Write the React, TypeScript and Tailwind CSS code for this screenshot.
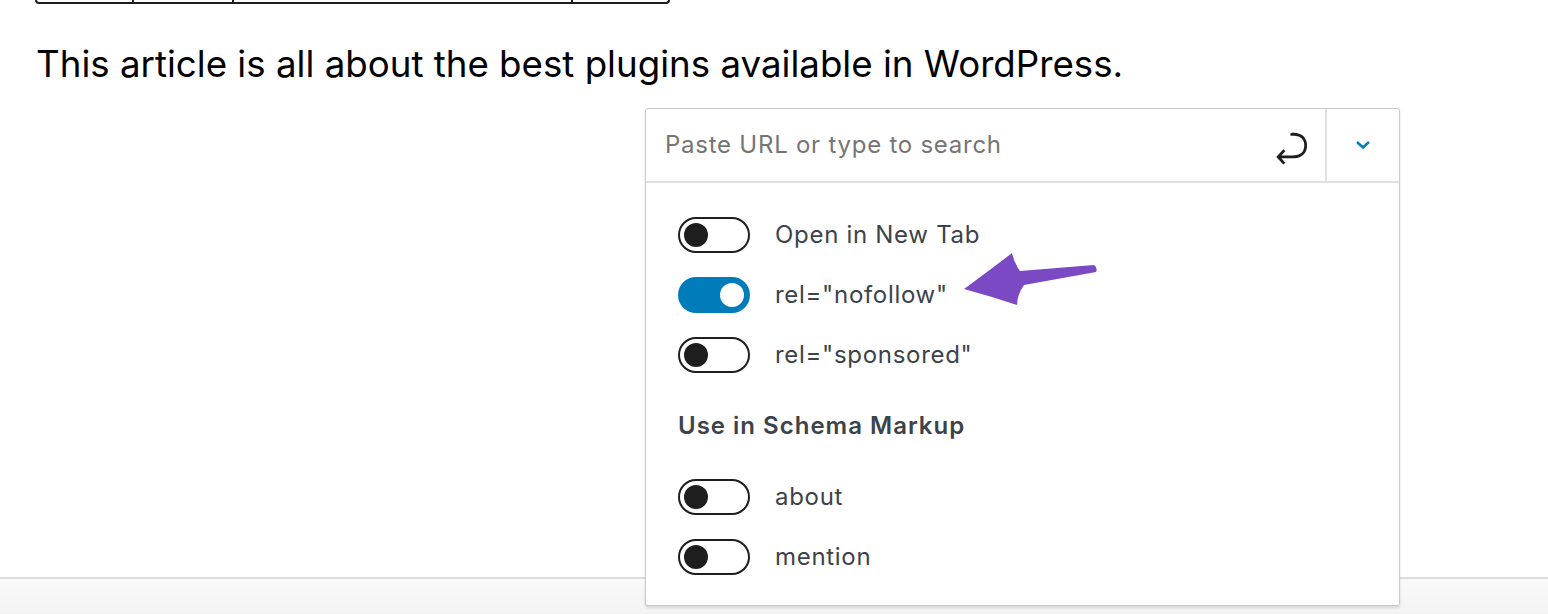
import React from "react";

function Toggle({ on }: { on?: boolean }) {
  if (on) {
    return (
      <div className="flex h-[36px] w-[72px] shrink-0 items-center justify-end rounded-full bg-[#007cba] pr-[6px]">
        <div className="h-[24px] w-[24px] rounded-full bg-white" />
      </div>
    );
  }
  return (
    <div className="flex h-[36px] w-[72px] shrink-0 items-center rounded-full border-2 border-[#1e1e1e] bg-white pl-[4px]">
      <div className="h-[24px] w-[24px] rounded-full bg-[#1e1e1e]" />
    </div>
  );
}

function Row({ label, on }: { label: string; on?: boolean }) {
  return (
    <div className="flex h-[60px] items-center gap-[25px]">
      <Toggle on={on} />
      <span className="text-[24px] tracking-[0.7px] text-[#3c434a]">{label}</span>
    </div>
  );
}

export default function App() {
  return (
    <div
      className="relative h-[614px] w-[1548px] overflow-hidden bg-white"
      style={{ fontFamily: "Inter, 'Noto Sans', sans-serif" }}
    >
      <div className="flex h-[577px] flex-col">
        <div className="ml-[35px] flex h-[4px] w-[635px] rounded-b-[4px] border-x-2 border-b-2 border-[#1e1e1e]">
          <div className="w-[97px] border-r-2 border-[#1e1e1e]" />
          <div className="w-[100px] border-r-2 border-[#1e1e1e]" />
          <div className="w-[339px] border-r-2 border-[#1e1e1e]" />
          <div className="flex-1" />
        </div>
        <p className="mt-[38px] pl-[36px] text-[36.7px] leading-[44px] text-black">
          This article is all about the best plugins available in WordPress.
        </p>
      </div>
      <div className="h-[37px] border-t-2 border-[#dcdcdc] bg-gradient-to-b from-[#fafafa] to-[#f3f3f3]" />

      <div className="absolute left-[645px] top-[108px] w-[755px] rounded-[3px] border border-[#cccccc] bg-white shadow-[0_2px_3px_rgba(0,0,0,0.12)]">
        <div className="flex h-[74px] border-b-2 border-[#e0e0e0]">
          <div className="flex flex-1 items-center pl-[19px] pr-[12px]">
            <span className="flex-1 text-[24px] tracking-[0.75px] text-[#757575]">Paste URL or type to search</span>
            <svg width="44" height="44" viewBox="0 0 24 24" className="mt-[6px] text-[#1e1e1e]">
              <path
                fill="currentColor"
                d="M6.734 16.106l2.176-2.38-1.093-1.028-3.846 4.158 3.846 4.157 1.093-1.027-2.176-2.38h2.811c1.125 0 2.25.03 3.374 0 1.428-.001 3.362-.25 4.963-1.277 1.66-1.065 2.868-2.906 2.868-5.859 0-2.479-1.327-4.896-3.650-5.930-1.820-.813-3.044-.8-4.806-.788l-.567.002v1.5c.184 0 .368 0 .553-.002 1.820-.007 2.704-.014 4.210.657 1.854.827 2.760 2.657 2.760 4.561 0 2.472-.973 3.824-2.178 4.596-1.258.807-2.864 1.040-4.163 1.040h-.02c-1.115.03-2.229 0-3.344 0H6.734z"
              />
            </svg>
          </div>
          <div className="flex w-[74px] items-center justify-center border-l-2 border-[#e0e0e0]">
            <svg width="16" height="10" viewBox="0 0 16 10">
              <path d="M2 2l6 5.5L14 2" fill="none" stroke="#007cba" strokeWidth="2.4" />
            </svg>
          </div>
        </div>
        <div className="flex flex-col px-[32px] pt-[22px] pb-[18px]">
          <Row label="Open in New Tab" />
          <Row label={'rel="nofollow"'} on />
          <Row label={'rel="sponsored"'} />
          <div className="flex h-[82px] items-center text-[24px] font-semibold tracking-[1px] text-[#3c434a]">
            Use in Schema Markup
          </div>
          <Row label="about" />
          <Row label="mention" />
        </div>
      </div>

      <svg className="pointer-events-none absolute left-[955px] top-[245px]" width="150" height="70" viewBox="955 245 150 70">
        <path
          fill="#7b49c4"
          d="M964 289 Q990 270 1012 253 Q1014 263 1020 271 L1094 265 Q1098 268 1096 272 L1024 285 Q1017 295 1017 305 Q990 296 964 289 Z"
        />
      </svg>
    </div>
  );
}
